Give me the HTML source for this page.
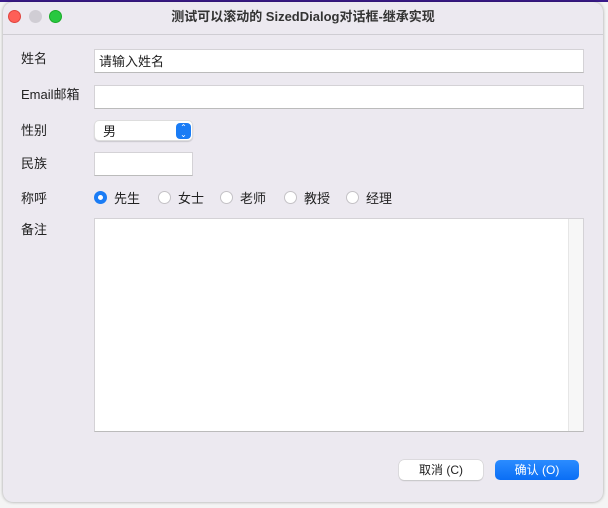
<!DOCTYPE html>
<html><head><meta charset="utf-8"><style>
*{box-sizing:border-box;margin:0;padding:0}
body{width:608px;height:508px;background:#f4f4f4;position:relative;overflow:hidden;font-family:"Liberation Sans","Noto Sans CJK SC",sans-serif;font-size:13px;color:#222}
.top{position:absolute;left:0;top:0;width:608px;height:2px;background:#3a1a8a}
.win{position:absolute;left:3px;top:2px;width:600px;height:500px;background:#ECE9F0;border-radius:10px;box-shadow:0 0 3px rgba(0,0,0,.35);overflow:hidden}
.tb{height:33px;border-bottom:1px solid #cfcdd3;text-align:center;line-height:30px;font-weight:bold;font-size:13px;color:#333}
.dot{position:absolute;top:8px;width:13px;height:13px;border-radius:50%}
.a{position:absolute}
.lbl{position:absolute;left:18px;font-size:13px}
.in{position:absolute;background:#fff;border:1px solid #d4d2d6;border-bottom-color:#bbb}
.r{position:absolute;top:188px;width:13px;height:13px;border-radius:50%;background:#fff;border:1px solid #c4c2c6}
.rt{position:absolute;top:186px}
.btn{position:absolute;top:458px;height:20px;border-radius:5px;text-align:center;line-height:20px;font-size:12px}
</style></head><body>
<div class="top"></div>
<div class="win">
<div class="tb">测试可以滚动的 SizedDialog对话框-继承实现</div>
<div class="dot" style="left:5px;background:#fe5f57;border:1px solid #e0443e"></div>
<div class="dot" style="left:26px;background:#d0cdd4"></div>
<div class="dot" style="left:46px;background:#28c840;border:1px solid #1aab29"></div>
<div class="lbl" style="top:46px">姓名</div>
<div class="in" style="left:91px;top:47px;width:490px;height:24px;padding:1px 4px">请输入姓名</div>
<div class="lbl" style="top:82px">Email邮箱</div>
<div class="in" style="left:91px;top:83px;width:490px;height:24px"></div>
<div class="lbl" style="top:118px">性别</div>
<div class="in" style="left:91px;top:118px;width:99px;height:21px;border-radius:5px;border-color:#ddd;box-shadow:0 1px 1px rgba(0,0,0,.15);padding:0 8px">男</div>
<div class="a" style="left:173px;top:121px;width:15px;height:16px;background:#1a7cf5;border-radius:4px;color:#fff;font-size:8px;line-height:7px;text-align:center;padding-top:1px">⌃<br>⌄</div>
<div class="lbl" style="top:151px">民族</div>
<div class="in" style="left:91px;top:150px;width:99px;height:24px"></div>
<div class="lbl" style="top:186px">称呼</div>
<div class="r" style="left:91px;top:189px;background:#fff;border:4px solid #1a7cf5"></div><div class="rt" style="left:111px">先生</div>
<div class="r" style="left:155px;top:189px"></div><div class="rt" style="left:175px">女士</div>
<div class="r" style="left:217px;top:189px"></div><div class="rt" style="left:237px">老师</div>
<div class="r" style="left:281px;top:189px"></div><div class="rt" style="left:301px">教授</div>
<div class="r" style="left:343px;top:189px"></div><div class="rt" style="left:363px">经理</div>
<div class="lbl" style="top:217px">备注</div>
<div class="in" style="left:91px;top:216px;width:490px;height:214px"></div>
<div class="a" style="left:565px;top:217px;width:15px;height:212px;background:#f7f7f7;border-left:1px solid #e6e6e6"></div>
<div class="btn" style="left:396px;width:84px;background:#fff;box-shadow:0 0 0 .5px #ccc,0 1px 1px rgba(0,0,0,.2)">取消 (C)</div>
<div class="btn" style="left:492px;width:84px;background:linear-gradient(#2b8cff,#0a6ef5);color:#fff">确认 (O)</div>
</div>
</body></html>
